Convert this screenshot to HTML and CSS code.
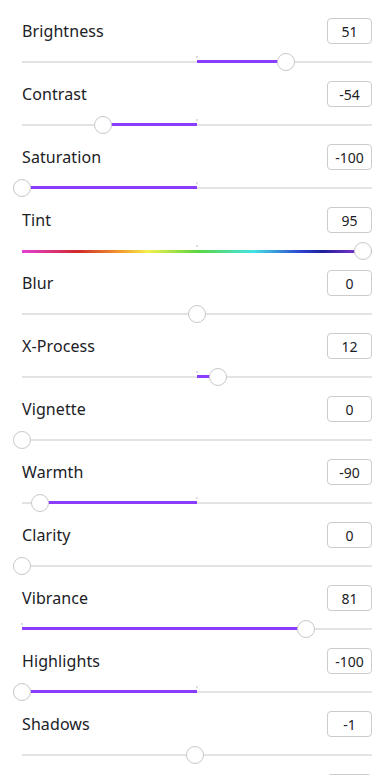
FILE: index.html
```html
<!DOCTYPE html>
<html lang="en">
<head>
    <meta name="viewport" content="width=device-width, initial-scale=1.0">
    <title>Adjust</title>
    <link rel="stylesheet" href="styles.css">
</head>
<body>
    <div class="panel">
        <div class="row">
            <div class="head"><span class="label">Brightness</span><span class="value">51</span></div>
            <div class="slider"><div class="track"></div><div class="tick" style="left:50%"></div><div class="fill" style="left:50%;width:25.5%"></div><div class="thumb" style="left:75.5%"></div></div>
        </div>
        <div class="row">
            <div class="head"><span class="label">Contrast</span><span class="value">-54</span></div>
            <div class="slider"><div class="track"></div><div class="tick" style="left:50%"></div><div class="fill" style="left:23%;width:27%"></div><div class="thumb" style="left:23%"></div></div>
        </div>
        <div class="row">
            <div class="head"><span class="label">Saturation</span><span class="value">-100</span></div>
            <div class="slider"><div class="track"></div><div class="tick" style="left:50%"></div><div class="fill" style="left:0%;width:50%"></div><div class="thumb" style="left:0%"></div></div>
        </div>
        <div class="row">
            <div class="head"><span class="label">Tint</span><span class="value">95</span></div>
            <div class="slider"><div class="track rainbow"></div><div class="tick" style="left:50%"></div><div class="thumb" style="left:97.5%"></div></div>
        </div>
        <div class="row">
            <div class="head"><span class="label">Blur</span><span class="value">0</span></div>
            <div class="slider"><div class="track"></div><div class="thumb" style="left:50%"></div></div>
        </div>
        <div class="row">
            <div class="head"><span class="label">X-Process</span><span class="value">12</span></div>
            <div class="slider"><div class="track"></div><div class="tick" style="left:50%"></div><div class="fill" style="left:50%;width:6%"></div><div class="thumb" style="left:56%"></div></div>
        </div>
        <div class="row">
            <div class="head"><span class="label">Vignette</span><span class="value">0</span></div>
            <div class="slider"><div class="track"></div><div class="thumb" style="left:0%"></div></div>
        </div>
        <div class="row">
            <div class="head"><span class="label">Warmth</span><span class="value">-90</span></div>
            <div class="slider"><div class="track"></div><div class="tick" style="left:50%"></div><div class="fill" style="left:5%;width:45%"></div><div class="thumb" style="left:5%"></div></div>
        </div>
        <div class="row">
            <div class="head"><span class="label">Clarity</span><span class="value">0</span></div>
            <div class="slider"><div class="track"></div><div class="thumb" style="left:0%"></div></div>
        </div>
        <div class="row">
            <div class="head"><span class="label">Vibrance</span><span class="value">81</span></div>
            <div class="slider"><div class="track"></div><div class="tick" style="left:0%"></div><div class="fill" style="left:0%;width:81%"></div><div class="thumb" style="left:81%"></div></div>
        </div>
        <div class="row">
            <div class="head"><span class="label">Highlights</span><span class="value">-100</span></div>
            <div class="slider"><div class="track"></div><div class="tick" style="left:50%"></div><div class="fill" style="left:0%;width:50%"></div><div class="thumb" style="left:0%"></div></div>
        </div>
        <div class="row">
            <div class="head"><span class="label">Shadows</span><span class="value">-1</span></div>
            <div class="slider"><div class="track"></div><div class="thumb" style="left:49.5%"></div></div>
        </div>
        <div class="row">
            <div class="head"><span class="label"></span><span class="value"></span></div>
        </div>
    </div>
</body>
</html>
```

FILE: styles.css
```css
* {
    margin: 0;
    padding: 0;
    box-sizing: border-box;
    font-family: "Noto Sans", Arial, sans-serif;
}

html, body {
    background: #fff;
    overflow: hidden;
}

.panel {
    display: flex;
    flex-direction: column;
    padding: 18px 6px 0 22px;
}

.row {
    display: flex;
    flex-direction: column;
    height: 63px;
    flex-shrink: 0;
}

.head {
    display: flex;
    justify-content: space-between;
    align-items: center;
    height: 26px;
}

.label {
    font-size: 16px;
    color: #1b2126;
    letter-spacing: 0.1px;
}

.value {
    width: 45px;
    height: 26px;
    display: flex;
    align-items: center;
    justify-content: center;
    border: 1px solid #cbccd0;
    border-radius: 4px;
    font-size: 14px;
    color: #1b2126;
}

.slider {
    position: relative;
    height: 37px;
}

.track {
    position: absolute;
    top: 17px;
    left: 0;
    right: 0;
    height: 2px;
    background: #e3e3e6;
}

.rainbow {
    height: 3px;
    background: linear-gradient(90deg, #e43fd6 0%, #cf2a2a 16%, #f39a2c 28%, #f4f04c 36%, #5ad53e 50%, #44e4e4 66%, #2b3fd0 80%, #1f1f9a 86%, #a23fe0 100%);
}

.tick {
    position: absolute;
    top: 12px;
    width: 2px;
    height: 2px;
    margin-left: -1px;
    background: #dcdce0;
}

.fill {
    position: absolute;
    top: 16px;
    height: 3px;
    background: #8b3dff;
}

.thumb {
    position: absolute;
    top: 9px;
    width: 18px;
    height: 18px;
    margin-left: -9px;
    border-radius: 50%;
    background: #fff;
    border: 1px solid #c8c8cc;
}
```
